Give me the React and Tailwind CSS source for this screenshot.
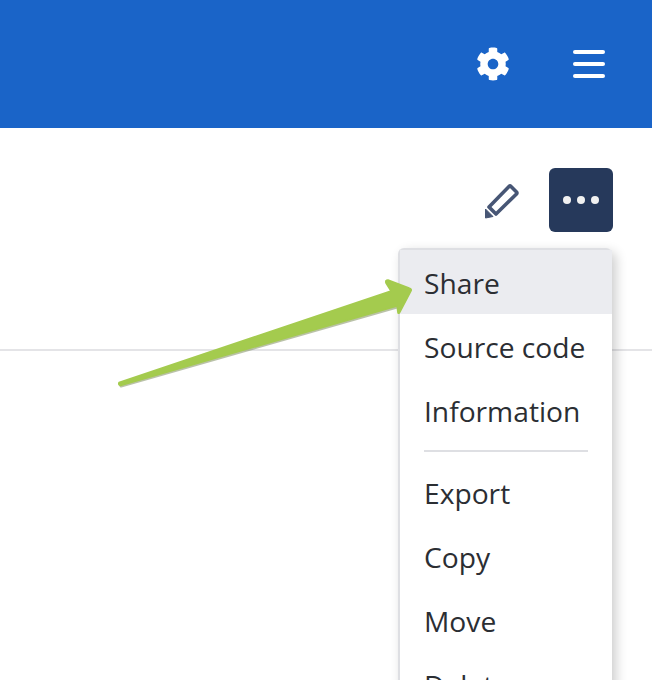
import { FaCog } from "react-icons/fa";

const ITEMS_TOP = ["Share", "Source code", "Information"];
const ITEMS_BOTTOM = ["Export", "Copy", "Move", "Delete"];

const MenuItem = ({ label, active }) => (
    <div className={`h-16 pl-6 pt-[3px] flex items-center text-[28.2px] text-[#2b2e33] ${active ? "bg-[#ebecf0]" : ""}`}>
        {label}
    </div>
);

const App = () => {
    return (
        <div
            className="relative w-[652px] h-[680px] overflow-hidden bg-white"
            style={{ fontFamily: '"Open Sans", "Noto Sans", sans-serif' }}
        >
            {/* Top bar */}
            <header className="h-32 bg-[#1a64c8] flex items-center justify-end pr-[47px] gap-[63px]">
                <FaCog className="text-white w-[34px] h-[34px]" />
                <div className="w-8 flex flex-col gap-2">
                    <span className="block h-1 rounded-full bg-white" />
                    <span className="block h-1 rounded-full bg-white" />
                    <span className="block h-1 rounded-full bg-white" />
                </div>
            </header>

            {/* Toolbar */}
            <div className="h-[223px] border-b-2 border-[#e4e4e7] pt-10 pr-[39px] flex justify-end items-start gap-[29px]">
                <svg width="36" height="36" viewBox="0 0 36 36" className="mt-[15px]" fill="none">
                    <path d="M25 3.5 Q26 2.5 27 3.5 L32.5 9 Q33.5 10 32.5 11 L12 31 L5 24 Z" stroke="#475675" strokeWidth="3.6" strokeLinejoin="round" />
                    <path d="M1.5 26 L9 33.5 L1.5 35 Z" fill="#475675" stroke="#475675" strokeLinejoin="round" />
                </svg>
                <button className="w-16 h-16 rounded-md bg-[#26395b] flex items-center justify-center gap-[6px]">
                    <span className="w-2 h-2 rounded-full bg-[#f1f1f1]" />
                    <span className="w-2 h-2 rounded-full bg-[#f1f1f1]" />
                    <span className="w-2 h-2 rounded-full bg-[#f1f1f1]" />
                </button>
            </div>

            {/* Dropdown */}
            <div className="absolute left-[398px] top-[248px] w-[214px] bg-white border-2 border-[#dedfe3] border-r-0 rounded-md shadow-[4px_4px_12px_rgba(0,0,0,0.2)]">
                {ITEMS_TOP.map((label, i) => (
                    <MenuItem key={label} label={label} active={i === 0} />
                ))}
                <div className="h-[2px] bg-[#dedfe3] ml-6 mr-6 mt-2 mb-2" />
                {ITEMS_BOTTOM.map((label) => (
                    <MenuItem key={label} label={label} />
                ))}
            </div>

            {/* Annotation arrow */}
            <svg width="652" height="680" viewBox="0 0 652 680" className="absolute left-0 top-0 pointer-events-none">
                <path
                    d="M121 386 L397 307"
                    stroke="#8d9a70"
                    strokeWidth="3"
                    strokeLinecap="round"
                    opacity="0.6"
                />
                <path
                    d="M119 382.5 Q118 385 120.5 385.5 L397 306 L398 313 Q399 314 400 312 L411 291 Q412 289 409 288 L388 280 Q385 280 386 283 L391 291 Z"
                    fill="#a4cb4e"
                    stroke="#a4cb4e"
                    strokeWidth="1.5"
                    strokeLinejoin="round"
                />
            </svg>
        </div>
    );
};

export default App;
